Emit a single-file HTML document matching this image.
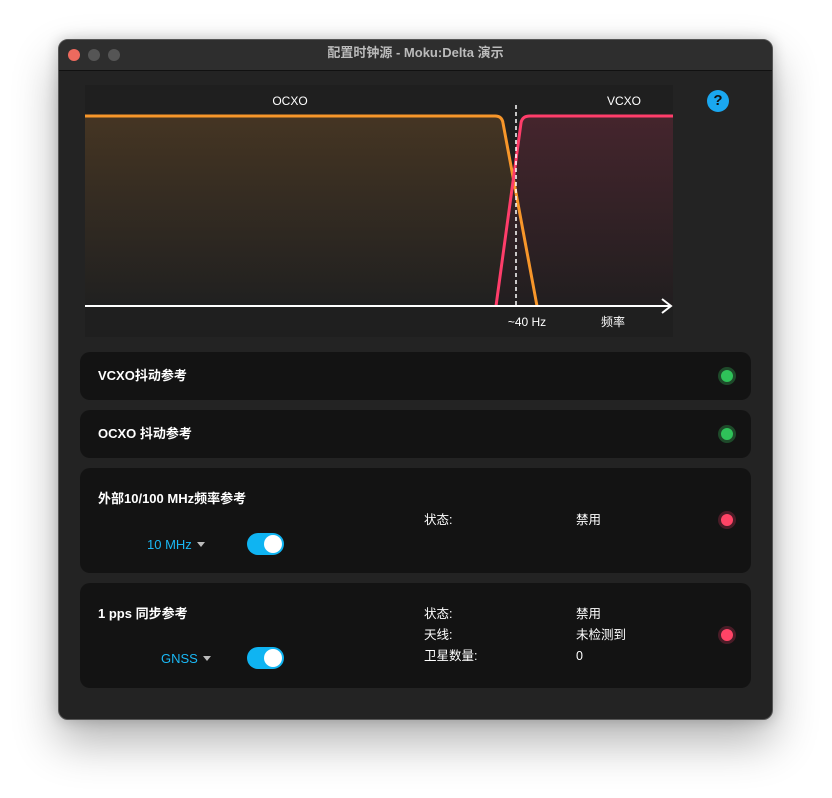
<!DOCTYPE html>
<html><head><meta charset="utf-8"><style>
*{margin:0;padding:0;box-sizing:border-box}
body{width:832px;height:798px;background:#fff;position:relative;overflow:hidden;font-family:"Liberation Sans","Noto Sans CJK SC",sans-serif;color:#fff}
.win{position:absolute;left:58px;top:39px;width:715px;height:681px;background:#232323;border-radius:10px;border:1px solid #555;box-shadow:0 22px 45px rgba(0,0,0,.3),0 0 14px rgba(0,0,0,.2);overflow:hidden}
.tb{height:31px;background:#2e2e2e;border-bottom:1px solid #111;position:relative}
.tb .t{position:absolute;left:0;right:0;top:5px;line-height:16px;text-align:center;font-size:13px;font-weight:bold;color:#bbb}
.dot{position:absolute;top:9px;width:12px;height:12px;border-radius:50%}
.card{position:absolute;left:21px;width:671px;background:#131313;border-radius:10px}
.lbl{position:absolute;font-size:13px;font-weight:bold;line-height:16px}
.led{position:absolute;left:638px;width:18px;height:18px;border-radius:50%}
.g{background:#2fc259;border:3px solid #1e4a2a}
.r{background:#ff4466;border:3px solid #4a1c27}
.sm{position:absolute;font-size:12.5px;color:#fff;line-height:16px}
.tog{position:absolute;left:167px;width:37px;height:22px;border-radius:11px;background:#0fb4f2}
.tog:after{content:"";position:absolute;right:2px;top:2px;width:18px;height:18px;border-radius:50%;background:#fff}
.sel{position:absolute;font-size:13px;color:#1ab8f5;line-height:16px}
.sel:after{content:"";display:inline-block;margin-left:5px;border:4px solid transparent;border-top:5px solid #bbb;vertical-align:-2px}
</style></head><body>
<div class="win">
<div class="tb"><div class="dot" style="left:9px;background:#ed6a5e"></div><div class="dot" style="left:29px;background:#555"></div><div class="dot" style="left:49px;background:#555"></div><div class="t">配置时钟源 - Moku:Delta 演示</div></div>
<svg style="position:absolute;left:26px;top:45px" width="588" height="252">
<defs><linearGradient id="o" x1="0" y1="0" x2="0" y2="1"><stop offset="0" stop-color="#453523"/><stop offset="1" stop-color="#202020"/></linearGradient>
<linearGradient id="p" x1="0" y1="0" x2="0" y2="1"><stop offset="0" stop-color="#45252d"/><stop offset="1" stop-color="#211e1f"/></linearGradient></defs>
<rect width="588" height="252" fill="#1f1f1f"/>
<path d="M0 31 L410 31 Q417 31 418 38 L452 221 L0 221Z" fill="url(#o)"/>
<path d="M411 221 L436 38 Q437 31 445 31 L588 31 L588 221Z" fill="url(#p)"/>
<path d="M0 31 L410 31 Q417 31 418 38 L452 221" fill="none" stroke="#f7962a" stroke-width="3"/>
<path d="M411 221 L436 38 Q437 31 445 31 L588 31" fill="none" stroke="#ff3d6a" stroke-width="3"/>
<line x1="431" y1="20" x2="431" y2="221" stroke="#fff" stroke-width="1.5" stroke-dasharray="4,3"/>
<line x1="0" y1="221" x2="586" y2="221" stroke="#fff" stroke-width="2"/>
<path d="M577 214 L586 221 L577 228" fill="none" stroke="#fff" stroke-width="2"/>
<text x="205" y="20" font-size="12" fill="#fff" text-anchor="middle" font-family="Liberation Sans">OCXO</text>
<text x="539" y="20" font-size="12" fill="#fff" text-anchor="middle" font-family="Liberation Sans">VCXO</text>
<text x="442" y="241" font-size="12" fill="#fff" text-anchor="middle" font-family="Liberation Sans">~40 Hz</text>
<text x="528" y="241" font-size="12" fill="#fff" text-anchor="middle" font-family="Liberation Sans,Noto Sans CJK SC">频率</text>
</svg>
<div style="position:absolute;left:648px;top:50px;width:22px;height:22px;border-radius:50%;background:#1aa7f0;color:#111;font-weight:bold;font-size:15px;text-align:center;line-height:22px">?</div>
<div class="card" style="top:312px;height:48px"><div class="lbl" style="left:18px;top:16px">VCXO抖动参考</div><div class="led g" style="top:15px"></div></div>
<div class="card" style="top:370px;height:48px"><div class="lbl" style="left:18px;top:16px">OCXO 抖动参考</div><div class="led g" style="top:15px"></div></div>
<div class="card" style="top:428px;height:105px"><div class="lbl" style="left:18px;top:23px">外部10/100 MHz频率参考</div>
<div class="sm" style="left:344px;top:44px">状态:</div><div class="sm" style="left:496px;top:44px">禁用</div>
<div class="led r" style="top:43px"></div>
<div class="sel" style="left:67px;top:69px">10 MHz</div><div class="tog" style="top:65px"></div></div>
<div class="card" style="top:543px;height:105px"><div class="lbl" style="left:18px;top:23px">1 pps 同步参考</div>
<div class="sm" style="left:344px;top:23px">状态:</div><div class="sm" style="left:496px;top:23px">禁用</div>
<div class="sm" style="left:344px;top:44px">天线:</div><div class="sm" style="left:496px;top:44px">未检测到</div>
<div class="sm" style="left:344px;top:65px">卫星数量:</div><div class="sm" style="left:496px;top:65px">0</div>
<div class="led r" style="top:43px"></div>
<div class="sel" style="left:81px;top:68px">GNSS</div><div class="tog" style="top:64px"></div></div>
</div>
</body></html>
